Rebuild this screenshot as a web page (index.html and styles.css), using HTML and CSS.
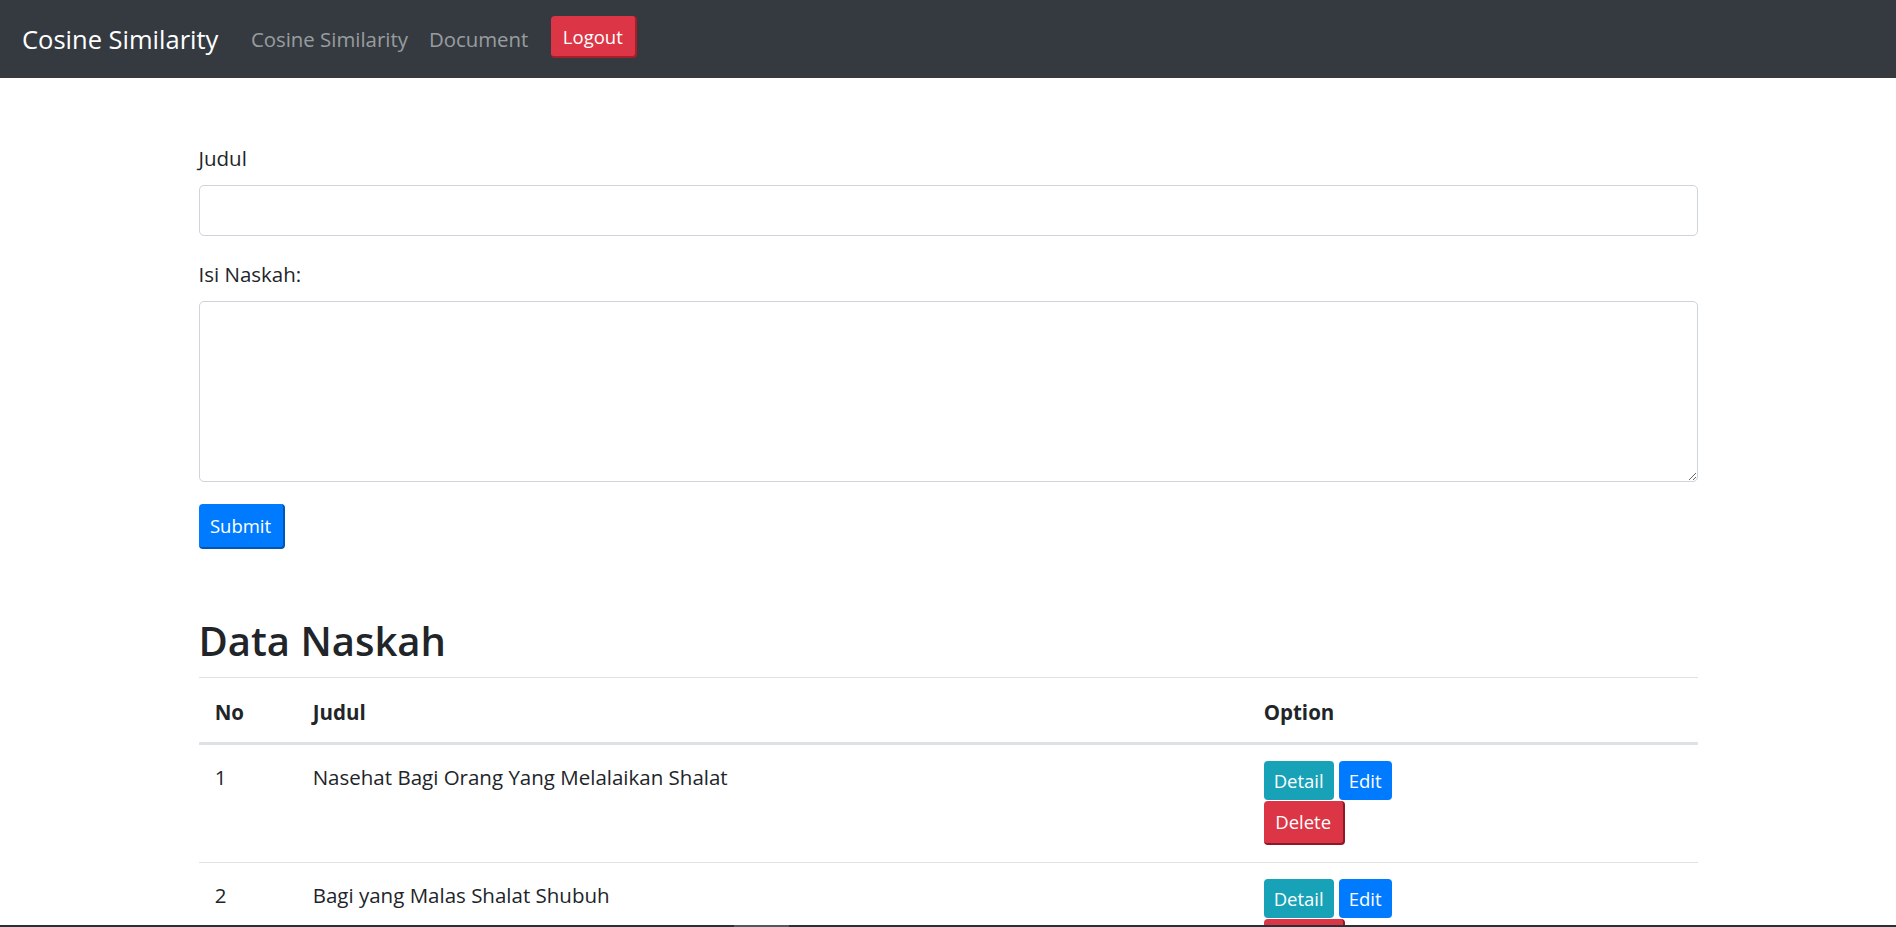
FILE: index.html
```html
<!DOCTYPE html>
<html lang="id">
<head>
<meta charset="utf-8">
<title>Cosine Similarity</title>
<link rel="stylesheet" href="styles.css">
</head>
<body>
<nav class="navbar">
  <a class="brand" href="#">Cosine Similarity</a>
  <a class="nav-link" href="#">Cosine Similarity</a>
  <a class="nav-link" href="#">Document</a>
  <button class="btn btn-logout" type="button">Logout</button>
</nav>

<main class="container">
  <form class="doc-form">
    <div class="form-group">
      <label class="label" for="judul">Judul</label>
      <input class="form-control" id="judul" type="text">
    </div>
    <div class="form-group">
      <label class="label" for="isi">Isi Naskah:</label>
      <textarea class="form-control textarea" id="isi"></textarea>
    </div>
    <button class="btn btn-submit" type="button">Submit</button>
  </form>

  <h2 class="section-title">Data Naskah</h2>
  <table class="table">
    <thead>
      <tr>
        <th class="col-no">No</th>
        <th class="col-judul">Judul</th>
        <th class="col-option">Option</th>
      </tr>
    </thead>
    <tbody>
      <tr>
        <td>1</td>
        <td>Nasehat Bagi Orang Yang Melalaikan Shalat</td>
        <td>
          <div class="actions">
            <a class="btn btn-sm btn-info" href="#">Detail</a>
            <a class="btn btn-sm btn-primary" href="#">Edit</a>
          </div>
          <button class="btn btn-delete" type="button">Delete</button>
        </td>
      </tr>
      <tr>
        <td>2</td>
        <td>Bagi yang Malas Shalat Shubuh</td>
        <td>
          <div class="actions">
            <a class="btn btn-sm btn-info" href="#">Detail</a>
            <a class="btn btn-sm btn-primary" href="#">Edit</a>
          </div>
          <button class="btn btn-delete" type="button">Delete</button>
        </td>
      </tr>
    </tbody>
  </table>
</main>

<div class="bottom-bar"><div class="bottom-thumb"></div></div>
</body>
</html>
```

FILE: styles.css
```css
* { box-sizing: border-box; }

html, body {
  margin: 0;
  padding: 0;
}

body {
  font-family: "Open Sans", "Noto Sans", sans-serif;
  font-size: 20.5px;
  line-height: 32.4px;
  color: #212529;
  background: #fff;
}

a { text-decoration: none; }

.navbar {
  height: 78px;
  background: #343a40;
  display: flex;
  align-items: center;
  padding: 0 22px;
}

.brand {
  color: #fff;
  font-size: 25.5px;
  margin-right: 22px;
}

.nav-link {
  color: rgba(255, 255, 255, 0.5);
  padding: 0 10.5px;
  font-size: 20.4px;
}

.btn {
  display: inline-block;
  font-family: inherit;
  color: #fff;
  border: 0;
  cursor: pointer;
}

.btn-logout {
  margin-left: 12px;
  margin-bottom: 4px;
  height: 42px;
  padding: 0 12px;
  font-size: 18.5px;
  background: #dc3545;
  border-radius: 4px;
  border-right: 2px solid #a71d2a;
  border-bottom: 2px solid #a71d2a;
}

.container {
  width: 1499px;
  margin: 64px auto 0;
}

.form-group { margin-bottom: 21.6px; }

.label {
  display: block;
  margin-bottom: 10.8px;
}

.form-control {
  display: block;
  width: 100%;
  height: 51px;
  border: 1px solid #ced4da;
  border-radius: 5px;
  font-family: inherit;
  font-size: 20px;
  padding: 8px 16px;
}

.textarea {
  height: 181px;
  resize: vertical;
}

.btn-submit {
  width: 86px;
  height: 45px;
  padding: 0;
  font-size: 18.5px;
  background: #007bff;
  border-radius: 4px;
  border-right: 2px solid #0056b3;
  border-bottom: 2px solid #0056b3;
}

.section-title {
  margin: 66px 0 10.8px;
  font-size: 40px;
  line-height: 51.8px;
  font-weight: 600;
}

.table {
  width: 100%;
  border-collapse: collapse;
}

.table th,
.table td {
  padding: 16px 16.2px 17px;
  text-align: left;
  vertical-align: top;
  border-top: 1px solid #dee2e6;
}

.table thead th {
  padding-top: 18px;
  padding-bottom: 13px;
  border-bottom: 3px solid #dee2e6;
  font-weight: 700;
}

.col-no { width: 98px; }
.col-judul { width: 951px; }

.actions {
  display: flex;
  gap: 5px;
}

.btn-sm {
  height: 39px;
  line-height: 39px;
  padding: 0 10px;
  border-radius: 4px;
  font-size: 18.5px;
}

.btn-info { background: #17a2b8; }
.btn-primary { background: #007bff; }

.btn-delete {
  display: block;
  margin-top: 1px;
  height: 44px;
  width: 81px;
  padding: 0;
  font-size: 18.5px;
  background: #dc3545;
  border-radius: 4px;
  border-right: 2px solid #8b1a26;
  border-bottom: 2px solid #8b1a26;
}

.bottom-bar {
  position: fixed;
  left: 0;
  right: 0;
  bottom: 0;
  height: 2px;
  background: #263238;
}

.bottom-thumb {
  margin-left: 734px;
  width: 55px;
  height: 2px;
  background: #4e5a60;
}
```
